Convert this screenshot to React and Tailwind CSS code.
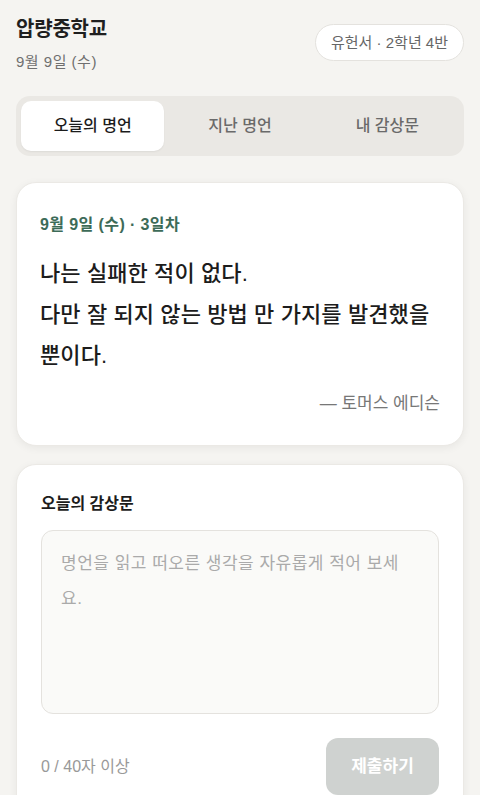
export default function App() {
  const font = { fontFamily: '"Liberation Sans", "Noto Sans CJK KR", sans-serif' };
  return (
    <div className="min-h-[795px] bg-[#f5f4f1] px-4 pt-[14px] text-[#1c1c1c]" style={font}>
      <div className="flex items-start justify-between">
        <div>
          <h1 className="text-[20px] font-bold leading-[30px] tracking-[-0.2px] text-[#1f1f1f]">압량중학교</h1>
          <p className="mt-[8px] text-[15px] leading-[20px] tracking-[0.5px] text-[#6f6f6f]">9월 9일 (수)</p>
        </div>
        <div className="mt-[10px] rounded-full border border-[#e4e2de] bg-white px-[15px] py-[7px] text-[15px] leading-[21px] text-[#666]">
          유헌서 · 2학년 4반
        </div>
      </div>

      <div className="mt-[24px] grid grid-cols-3 gap-[4px] rounded-[14px] bg-[#eae8e4] p-[5px]">
        <div className="flex h-[50px] items-center justify-center rounded-[10px] bg-white text-[16px] font-medium text-[#1c1c1c] shadow-[0_1px_2px_rgba(0,0,0,0.06)]">오늘의 명언</div>
        <div className="flex h-[50px] items-center justify-center text-[16px] font-medium text-[#6a6a6a]">지난 명언</div>
        <div className="flex h-[50px] items-center justify-center text-[16px] font-medium text-[#6a6a6a]">내 감상문</div>
      </div>

      <div className="mt-[26px] rounded-[20px] border border-[#ebe9e5] bg-white px-[23px] pb-[29px] pt-[32px] shadow-[0_2px_8px_rgba(0,0,0,0.06)]">
        <p className="text-[16px] font-bold leading-[20px] tracking-[0.4px] text-[#3d6b58]">9월 9일 (수) · 3일차</p>
        <p className="mt-[18px] text-[22px] font-medium leading-[41px] tracking-[0.1px] text-[#1c1c1c]">
          나는 실패한 적이 없다.<br />다만 잘 되지 않는 방법 만 가지를 발견했을 뿐이다.
        </p>
        <p className="mt-[16px] text-right text-[17px] leading-[24px] text-[#777]">— 토머스 에디슨</p>
      </div>

      <div className="mt-[18px] rounded-[20px] border border-[#ebe9e5] bg-white px-[24px] pt-[28px] shadow-[0_2px_8px_rgba(0,0,0,0.06)]">
        <p className="text-[16px] font-bold leading-[22px] text-[#1c1c1c]">오늘의 감상문</p>
        <textarea
          className="mt-[15px] block h-[184px] w-full resize-none rounded-[12px] border border-[#e4e2de] bg-[#fafaf8] px-[19px] pt-[15px] text-[17px] leading-[35px] tracking-[0.5px] text-[#1c1c1c] outline-none placeholder:text-[#aaa]"
          style={font}
          placeholder="명언을 읽고 떠오른 생각을 자유롭게 적어 보세요."
        />
        <div className="mt-[24px] flex items-center justify-between pb-[20px]">
          <span className="text-[16px] text-[#999]">0 / 40자 이상</span>
          <button className="h-[57px] w-[113px] rounded-[12px] bg-[#cfd2d0] text-[17px] font-bold text-white" style={font}>제출하기</button>
        </div>
      </div>
    </div>
  );
}
